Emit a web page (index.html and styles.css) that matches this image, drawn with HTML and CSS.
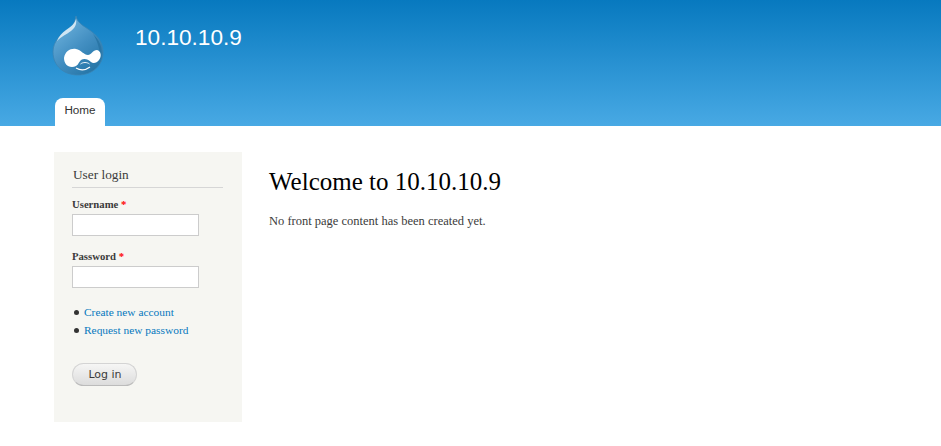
FILE: index.html
```html
<!DOCTYPE html>
<html lang="en">
<head>
  <meta charset="UTF-8" />
  <title>Welcome to 10.10.10.9</title>
  <link rel="stylesheet" href="styles.css">
</head>
<body>

<header class="site-header">
  <div class="branding">
    <a href="#" class="logo" title="Home">
      <svg width="54" height="62" viewBox="0 0 54 62">
        <defs>
          <linearGradient id="dropFill" x1="0.15" y1="0.1" x2="0.8" y2="1">
            <stop offset="0" stop-color="#6db2dc"/>
            <stop offset="0.5" stop-color="#438fc2"/>
            <stop offset="1" stop-color="#2273a5"/>
          </linearGradient>
        </defs>
        <path d="M25 2 C26 8 31 11 37 15 C46 21 52 28 52 38 C52 52 41 61 27 61 C13 61 2 52 2 38 C2 27 10 20 17 16 C22 13 24 8 25 2 Z" fill="url(#dropFill)" stroke="#3a84b4" stroke-width="0.8"/>
        <path d="M25 5 C24 9 20 13 15 16 C11 19 8 22 6 27 C11 22 16 20 20 17 C24 14 26 10 25 5 Z" fill="#cfe5f3"/>
        <path d="M42 20 C48 26 52 32 50 43 C48 35 47 27 42 20 Z" fill="#2a76a6"/>
        <path d="M13 44 C14 37 20 34 25 35 C30 36 33 41 37 41 C40 41 42 36 46 36 C50 37 51 42 48 46 C46 49 42 50 40 48 C37 45 33 44 30 46 C27 49 27 53 21 53 C16 53 13 49 13 44 Z" fill="#fff"/>
        <path d="M29.5 50 C32 48 36 48 38.5 50" fill="none" stroke="#fff" stroke-width="0.9"/>
        <path d="M25 54 C30 57 35 56 39 53" fill="none" stroke="#fff" stroke-width="1.1"/>
      </svg>
    </a>
    <div class="site-name">10.10.10.9</div>
  </div>
  <nav class="tabs">
    <a href="#" class="tab">Home</a>
  </nav>
</header>

<main class="content-wrap">
  <aside class="sidebar">
    <h2 class="block-title">User login</h2>
    <form class="login-form">
      <label class="field-label" for="edit-name">Username <span class="required">*</span></label>
      <input class="text-input" id="edit-name" type="text">
      <label class="field-label" for="edit-pass">Password <span class="required">*</span></label>
      <input class="text-input" id="edit-pass" type="password">
      <ul class="link-list">
        <li><a href="#">Create new account</a></li>
        <li><a href="#">Request new password</a></li>
      </ul>
      <button class="login-btn" type="button">Log in</button>
    </form>
  </aside>
  <section class="main-content">
    <h1 class="page-title">Welcome to 10.10.10.9</h1>
    <p class="intro">No front page content has been created yet.</p>
  </section>
</main>

</body>
</html>
```

FILE: styles.css
```css
body {
  margin: 0;
  font-family: "Liberation Serif", serif;
  font-size: 13px;
  color: #3b3b3b;
  background: #fff;
}

.site-header {
  height: 126px;
  background: linear-gradient(to bottom, #0779bf, #48a9e4);
  display: flex;
  flex-direction: column;
  justify-content: space-between;
}

.branding {
  display: flex;
  align-items: flex-start;
  padding: 14px 0 0 51px;
}

.logo {
  display: block;
  height: 62px;
}

.site-name {
  margin: 10px 0 0 30px;
  font-family: "Liberation Sans", sans-serif;
  font-size: 22.6px;
  line-height: 28px;
  color: #fff;
}

.tabs {
  padding-left: 55px;
  display: flex;
}

.tab {
  width: 50px;
  height: 28px;
  background: #fff;
  border-radius: 8px 8px 0 0;
  font-family: "Liberation Sans", sans-serif;
  font-size: 11.7px;
  line-height: 24px;
  text-align: center;
  color: #333;
  text-decoration: none;
}

.content-wrap {
  display: flex;
  align-items: flex-start;
  padding: 26px 0 0 54px;
}

.sidebar {
  width: 188px;
  height: 270px;
  box-sizing: border-box;
  padding: 15px 19px 0 18px;
  background: #f6f6f2;
}

.block-title {
  margin: 0 0 10px;
  padding: 0 0 5px 1px;
  border-bottom: 1px solid #d6d6d6;
  font-size: 13.3px;
  font-weight: normal;
  line-height: 15px;
  color: #3b3b3b;
}

.field-label {
  display: block;
  font-size: 10.7px;
  font-weight: bold;
  line-height: 13px;
  margin-bottom: 3px;
}

.required {
  color: #f00;
}

.text-input {
  display: block;
  box-sizing: border-box;
  width: 127px;
  height: 22px;
  margin: 0 0 14px;
  padding: 2px;
  border: 1px solid #ccc;
  background: #fff;
}

.link-list {
  list-style: none;
  margin: 15px 0 0;
  padding: 0;
  font-size: 11.4px;
  line-height: 18px;
}

.link-list li {
  position: relative;
  padding-left: 12px;
}

.link-list li::before {
  content: "";
  position: absolute;
  left: 2px;
  top: 7px;
  width: 5px;
  height: 5px;
  border-radius: 50%;
  background: #333;
}

.link-list a {
  color: #0678be;
  text-decoration: none;
}

.login-btn {
  display: block;
  width: 65px;
  height: 23px;
  margin-top: 24px;
  padding: 0 0 0 1px;
  border: 1px solid #d4d4d4;
  border-bottom-color: #bbb;
  border-radius: 15px;
  background: linear-gradient(to bottom, #f6f6f5, #dcdcdc);
  font-family: "DejaVu Sans", sans-serif;
  font-size: 11px;
  color: #3a3a3a;
}

.main-content {
  padding: 0 0 0 27px;
}

.page-title {
  margin: 15px 0 0;
  font-size: 25px;
  font-weight: normal;
  line-height: 30px;
  color: #000;
}

.intro {
  margin: 15px 0 0;
  font-size: 12.5px;
  line-height: 18px;
}
```
